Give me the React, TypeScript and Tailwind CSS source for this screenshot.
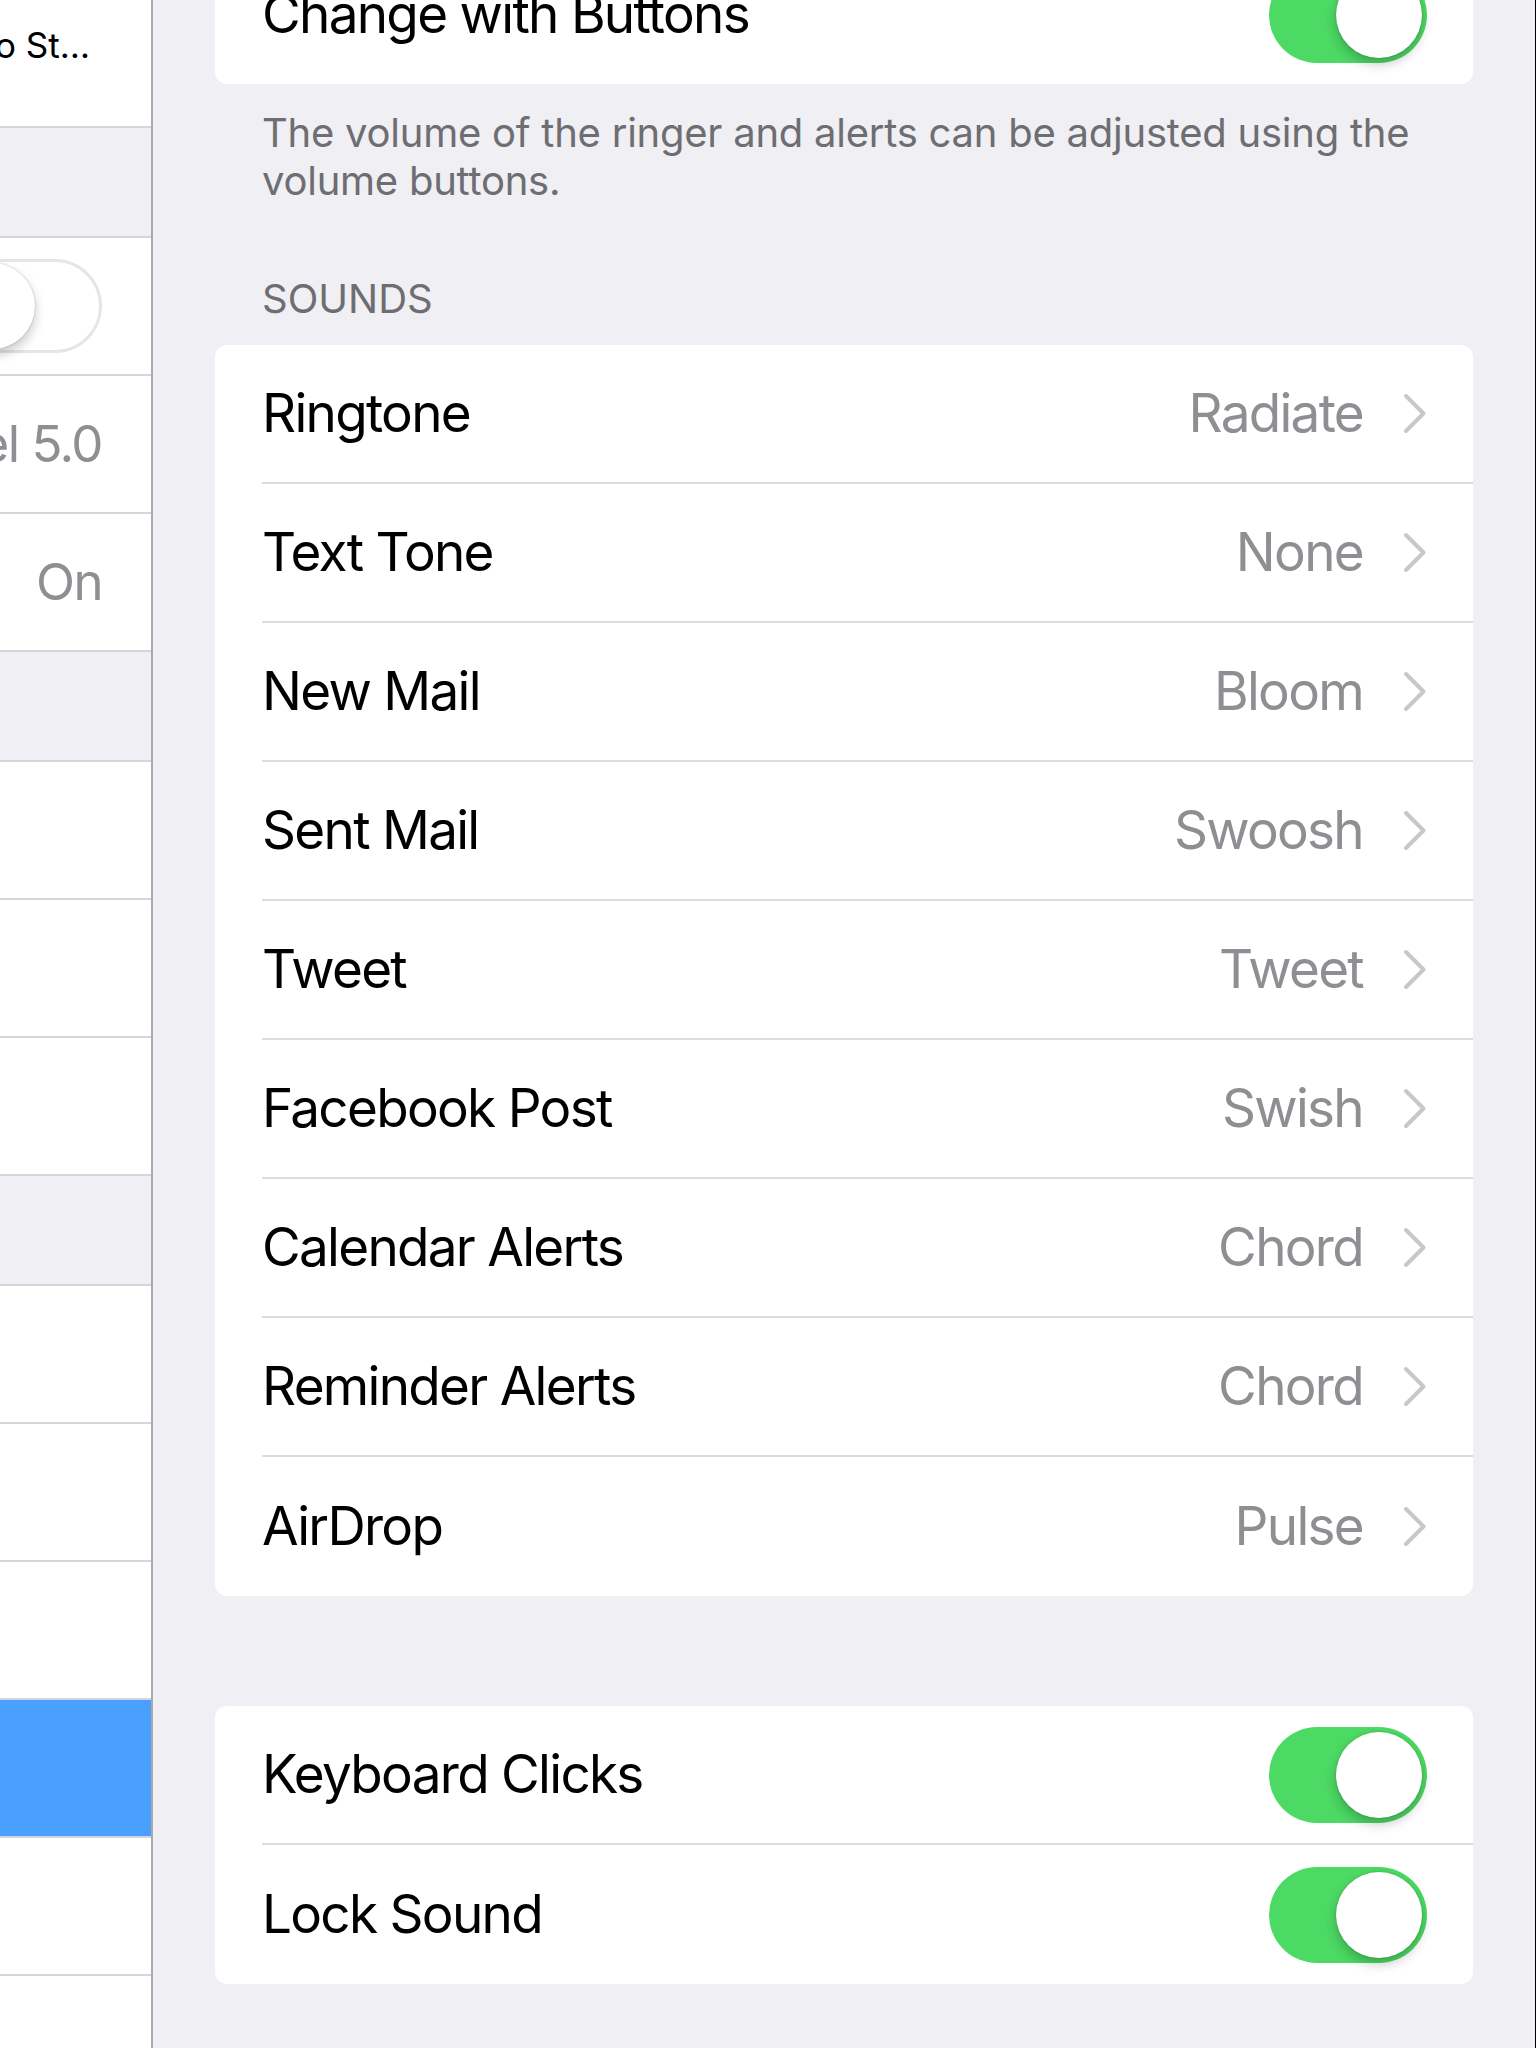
import React from "react";

const font = { fontFamily: "Inter, 'Liberation Sans', sans-serif" };

const Toggle: React.FC<{ on?: boolean }> = ({ on = true }) => (
  <div
    className={
      on
        ? "w-[158px] h-[96px] rounded-full bg-[#4cd964] flex items-center justify-end p-[5px] shrink-0"
        : "w-[156px] h-[94px] rounded-full bg-white border-[3px] border-[#e5e5ea] flex items-center justify-start shrink-0"
    }
  >
    <div className="w-[86px] h-[86px] rounded-full bg-white shadow-[0_6px_12px_rgba(0,0,0,0.22),0_0_2px_rgba(0,0,0,0.25)]" />
  </div>
);

const Chevron = () => (
  <svg width="24" height="41" viewBox="0 0 24 41" fill="none" className="shrink-0">
    <path d="M3 3 L20.5 20.5 L3 38" stroke="#c7c7cc" strokeWidth="4" strokeLinecap="round" strokeLinejoin="round" />
  </svg>
);

const sounds = [
  ["Ringtone", "Radiate"],
  ["Text Tone", "None"],
  ["New Mail", "Bloom"],
  ["Sent Mail", "Swoosh"],
  ["Tweet", "Tweet"],
  ["Facebook Post", "Swish"],
  ["Calendar Alerts", "Chord"],
  ["Reminder Alerts", "Chord"],
  ["AirDrop", "Pulse"],
];

const Row: React.FC<{ label: string; last?: boolean; children?: React.ReactNode }> = ({ label, last, children }) => (
  <div className="pl-[47px]">
    <div
      className={
        "h-[139px] flex items-center justify-between pr-[46px] " +
        (last ? "" : "border-b-2 border-[#dcdce0]")
      }
    >
      <span className="text-[53px] text-black tracking-[-0.032em]">{label}</span>
      <div className="flex items-center gap-[40px]">{children}</div>
    </div>
  </div>
);

const LeftRow: React.FC<{ children?: React.ReactNode; blue?: boolean; extra?: string }> = ({ children, blue, extra }) => (
  <div
    className={
      "h-[138px] shrink-0 flex justify-end border-b-2 border-[#d6d6da] " +
      (blue ? "bg-[#4aa0fe] " : "bg-white ") +
      (extra || "items-center pr-[49px]")
    }
  >
    {children}
  </div>
);

const LeftGap = () => <div className="h-[110px] shrink-0 bg-[#efeff4] border-b-2 border-[#d6d6da]" />;

export default function App() {
  return (
    <div className="w-[1536px] h-[2048px] flex overflow-hidden bg-[#efeff4]" style={font}>
      {/* master list, slid partly off screen */}
      <div className="w-[151px] shrink-0 h-full overflow-hidden bg-white flex flex-col">
        <div className="mt-[-10px] flex flex-col">
          <LeftRow extra="items-start pt-[35px] pr-[61px]">
            <span className="text-[35px] leading-[40px] text-black whitespace-nowrap shrink-0">Photo St…</span>
          </LeftRow>
          <LeftGap />
          <LeftRow>
            <Toggle on={false} />
          </LeftRow>
          <LeftRow>
            <span className="text-[51px] text-[#8e8e93] whitespace-nowrap shrink-0 tracking-[-0.03em]">Level 5.0</span>
          </LeftRow>
          <LeftRow>
            <span className="text-[51px] text-[#8e8e93] whitespace-nowrap shrink-0 tracking-[-0.03em]">On</span>
          </LeftRow>
          <LeftGap />
          <LeftRow />
          <LeftRow />
          <LeftRow />
          <LeftGap />
          <LeftRow />
          <LeftRow />
          <LeftRow />
          <LeftRow blue />
          <LeftRow />
          <LeftRow />
        </div>
      </div>
      <div className="w-[2px] shrink-0 bg-[#a9a9ae]" />

      {/* detail pane */}
      <div className="flex-1 h-full overflow-hidden px-[62px] border-r border-black">
        <div className="mt-[-55px] flex flex-col">
          <div className="bg-white rounded-[12px]">
            <Row label="Change with Buttons" last>
              <Toggle />
            </Row>
          </div>

          <p className="pt-[25px] pl-[47px] pr-[30px] text-[40px] leading-[48px] text-[#6d6d72] tracking-[-0.006em]">
            The volume of the ringer and alerts can be adjusted using the volume buttons.
          </p>

          <div className="mt-[70px] px-[47px] text-[40px] leading-[48px] text-[#6d6d72]">SOUNDS</div>

          <div className="mt-[22px] bg-white rounded-[12px]">
            {sounds.map(([label, value], i) => (
              <Row key={label} label={label} last={i === sounds.length - 1}>
                <span className="text-[53px] text-[#8e8e93] tracking-[-0.032em]">{value}</span>
                <Chevron />
              </Row>
            ))}
          </div>

          <div className="mt-[110px] bg-white rounded-[12px]">
            <Row label="Keyboard Clicks">
              <Toggle />
            </Row>
            <Row label="Lock Sound" last>
              <Toggle />
            </Row>
          </div>
        </div>
      </div>
    </div>
  );
}
